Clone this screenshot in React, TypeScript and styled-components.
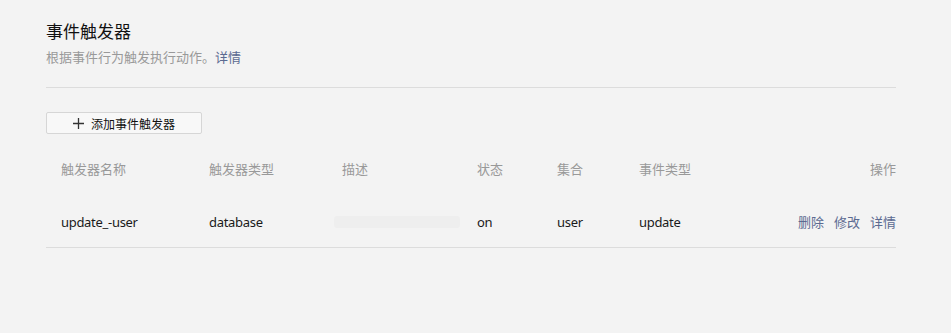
import React from "react";
import styled, { createGlobalStyle } from "styled-components";

const Global = createGlobalStyle`
  html, body { margin: 0; padding: 0; background: #f3f3f3; }
  body { font-family: "Segoe UI", "Noto Sans", "Noto Sans CJK SC", sans-serif; color: #222; }
`;

const Page = styled.div`
  width: 850px;
  padding: 19px 0 0 46px;
`;

const Title = styled.h1`
  margin: 0;
  font-size: 17px;
  font-weight: 400;
  line-height: 24px;
  color: #111;
  font-family: "Noto Sans CJK SC", sans-serif;
`;

const Sub = styled.p`
  margin: 5px 0 0;
  font-size: 13px;
  line-height: 18px;
  color: #999;
  font-family: "Noto Sans CJK SC", sans-serif;
`;

const Link = styled.a<{ $gap?: number }>`
  color: #5b6a91;
  text-decoration: none;
  cursor: pointer;
  margin-left: ${(p) => p.$gap ?? 0}px;
`;

const Divider = styled.div`
  margin-top: 21px;
  height: 1px;
  background: #dcdcdc;
`;

const AddButton = styled.button`
  margin-top: 24px;
  width: 156px;
  height: 22px;
  display: flex;
  align-items: center;
  justify-content: center;
  gap: 7px;
  border: 1px solid #d6d6d6;
  border-radius: 2px;
  background: #f8f8f8;
  font-family: "Noto Sans CJK SC", sans-serif;
  font-size: 12px;
  color: #111;
  padding: 0;
`;

const Grid = styled.div`
  display: grid;
  grid-template-columns: 148px 133px 135px 80px 82px 1fr auto;
`;

const HeadRow = styled(Grid)`
  margin-top: 13px;
  height: 42px;
  align-items: center;
`;

const BodyRow = styled(Grid)`
  height: 59px;
  align-items: start;
  padding-top: 23px;
  box-sizing: border-box;
  border-bottom: 1px solid #dcdcdc;
`;

const HeadCell = styled.div<{ $right?: boolean }>`
  padding-left: ${(p) => (p.$right ? 0 : 15)}px;
  text-align: ${(p) => (p.$right ? "right" : "left")};
  font-size: 13px;
  color: #999;
  font-family: "Noto Sans CJK SC", sans-serif;
`;

const Cell = styled.div<{ $right?: boolean }>`
  padding-left: ${(p) => (p.$right ? 0 : 15)}px;
  text-align: ${(p) => (p.$right ? "right" : "left")};
  font-size: 13px;
  letter-spacing: -0.3px;
  color: #1a1a1a;
  line-height: 20px;
`;

const Ops = styled(Cell)`
  font-family: "Noto Sans CJK SC", sans-serif;
  letter-spacing: 0;
  white-space: nowrap;
`;

const Skeleton = styled.div`
  margin: 4px 0 0 -8px;
  width: 126px;
  height: 12px;
  border-radius: 3px;
  background: #eeeeee;
`;

function Plus() {
  return (
    <svg width="11" height="11" viewBox="0 0 11 11">
      <path d="M5.5 0v11M0 5.5h11" stroke="#333" strokeWidth="1.3" />
    </svg>
  );
}

export default function App() {
  return (
    <>
      <Global />
      <Page>
        <Title>事件触发器</Title>
        <Sub>
          根据事件行为触发执行动作。<Link>详情</Link>
        </Sub>
        <Divider />
        <AddButton>
          <Plus />
          添加事件触发器
        </AddButton>
        <HeadRow>
          <HeadCell>触发器名称</HeadCell>
          <HeadCell>触发器类型</HeadCell>
          <HeadCell>描述</HeadCell>
          <HeadCell>状态</HeadCell>
          <HeadCell>集合</HeadCell>
          <HeadCell>事件类型</HeadCell>
          <HeadCell $right>操作</HeadCell>
        </HeadRow>
        <BodyRow>
          <Cell>update_-user</Cell>
          <Cell>database</Cell>
          <Cell>
            <Skeleton />
          </Cell>
          <Cell>on</Cell>
          <Cell>user</Cell>
          <Cell>update</Cell>
          <Ops $right>
            <Link>删除</Link>
            <Link $gap={10}>修改</Link>
            <Link $gap={10}>详情</Link>
          </Ops>
        </BodyRow>
      </Page>
    </>
  );
}
